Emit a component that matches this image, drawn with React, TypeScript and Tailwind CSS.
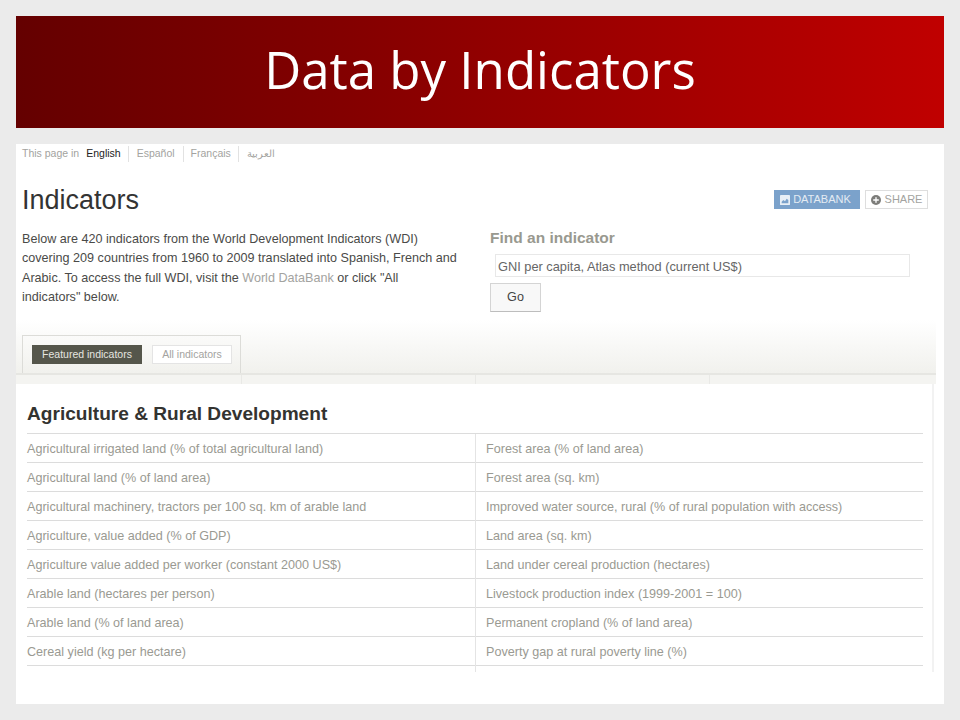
import { Plus } from 'lucide-react';

const leftRows = [
  'Agricultural irrigated land (% of total agricultural land)',
  'Agricultural land (% of land area)',
  'Agricultural machinery, tractors per 100 sq. km of arable land',
  'Agriculture, value added (% of GDP)',
  'Agriculture value added per worker (constant 2000 US$)',
  'Arable land (hectares per person)',
  'Arable land (% of land area)',
  'Cereal yield (kg per hectare)',
];

const rightRows = [
  'Forest area (% of land area)',
  'Forest area (sq. km)',
  'Improved water source, rural (% of rural population with access)',
  'Land area (sq. km)',
  'Land under cereal production (hectares)',
  'Livestock production index (1999-2001 = 100)',
  'Permanent cropland (% of land area)',
  'Poverty gap at rural poverty line (%)',
];

function IndicatorList({ rows, className = '', itemClassName = '' }: { rows: string[]; className?: string; itemClassName?: string }) {
  return (
    <ul className={className}>
      {rows.map((row) => (
        <li key={row} className={`h-[29px] border-b border-[#dcdcdc] text-[12.6px] leading-[30px] whitespace-nowrap text-[#9a9a92] ${itemClassName}`}>
          {row}
        </li>
      ))}
    </ul>
  );
}

export default function App() {
  return (
    <div className="flex h-[720px] w-[960px] flex-col gap-4 bg-[#ebebeb] p-4 font-['Liberation_Sans',Arial,sans-serif]">
      <header className="flex h-[112px] shrink-0 items-center justify-center bg-gradient-to-r from-[#640000] to-[#c00000] pb-[6px]">
        <h1 className="font-['Open_Sans',sans-serif] text-[51px] leading-none text-white">Data by Indicators</h1>
      </header>

      <main className="h-[560px] shrink-0 bg-white">
        <div className="w-[920px]">
          {/* language bar */}
          <div className="flex h-[20px] items-center pl-[6px] text-[10.5px] text-[#a3a3a0]">
            <span className="mr-[7px]">This page in</span>
            <span className="border-r border-[#e2e2e2] pr-[7px] text-[#222]">English</span>
            <span className="border-r border-[#e2e2e2] px-[8px]">Español</span>
            <span className="border-r border-[#e2e2e2] px-[7px]">Français</span>
            <span className="mb-[2px] px-[8px] font-['Noto_Sans',sans-serif] text-[10px]" dir="rtl">العربية</span>
          </div>

          <div className="flex h-[156px] pl-[6px]">
            <div className="w-[468px]">
              <h2 className="mt-[18px] text-[27px] leading-[36px] text-[#333]">Indicators</h2>
              <p className="mt-[12px] w-[437px] text-[12.6px] leading-[19.3px] text-[#4a4a48]">
                Below are 420 indicators from the World Development Indicators (WDI) covering 209 countries from 1960 to
                2009 translated into Spanish, French and Arabic. To access the full WDI, visit the{' '}
                <span className="text-[#a3a3a0]">World DataBank</span> or click "All indicators" below.
              </p>
            </div>

            <div className="flex-1">
              <div className="mt-[26px] flex justify-end gap-[5px] pr-[8px]">
                <button className="flex h-[19px] w-[86px] items-center justify-center gap-[3px] bg-[#7ba2cb] pr-[3px] text-[11px] text-[#e3ebf3]">
                  <svg viewBox="0 0 12 12" className="h-[10px] w-[10px]">
                    <rect width="12" height="12" rx="1" fill="#e8eff6" />
                    <path d="M2 10V8l2-2 2 1.500 2-3 2 1.500V10z" fill="#7ba2cb" />
                  </svg>
                  DATABANK
                </button>
                <button className="flex h-[19px] w-[63px] items-center justify-center gap-[4px] border border-[#dedede] bg-white text-[11px] text-[#a3a3a0]">
                  <span className="flex h-[10px] w-[10px] items-center justify-center rounded-full bg-[#7d7d7a]">
                    <Plus className="h-[8px] w-[8px] text-white" strokeWidth={4} />
                  </span>
                  SHARE
                </button>
              </div>
              <h3 className="mt-[20px] text-[15.5px] leading-[18px] font-bold text-[#99998f]">Find an indicator</h3>
              <div className="mt-[7px] ml-[5px] h-[23px] w-[415px] border border-[#e8e8e8] pl-[2px] text-[12.8px] leading-[23px] text-[#666]">
                GNI per capita, Atlas method (current US$)
              </div>
              <button className="mt-[6px] block h-[29px] w-[51px] border border-[#d4d4d4] border-b-[#bdbdbd] bg-[#f8f8f8] text-[12.6px] text-[#444]">
                Go
              </button>
            </div>
          </div>

          {/* tabs strip */}
          <div className="h-[55px] border-b-2 border-[#e6e6e2] bg-gradient-to-b from-white to-[#f1f1ed] pt-[15px] pl-[6px]">
            <div className="flex h-[38px] w-[219px] gap-[10px] border-x border-t border-[#dcdcd8] pt-[9px] pl-[9px]">
              <span className="flex h-[19px] w-[110px] items-center justify-center bg-[#55564b] text-[10.5px] text-[#e6e6e0]">
                Featured indicators
              </span>
              <span className="flex h-[19px] w-[80px] items-center justify-center border border-[#e4e4e4] bg-white text-[10.5px] text-[#a3a3a0]">
                All indicators
              </span>
            </div>
          </div>
          <div className="flex h-[9px] bg-[#f4f4f1]">
            <div className="ml-[225px] h-full w-[235px] border-x border-[#e9e9e6]" />
            <div className="h-full w-[234px] border-r border-[#e9e9e6]" />
          </div>

          <section className="h-[288px] w-[918px] border-r-2 border-[#f2f2f2] pr-[9px] pl-[11px]">
            <h2 className="pt-[19px] text-[19.1px] leading-[22px] font-bold text-[#333330]">Agriculture &amp; Rural Development</h2>
            <div className="mt-[8px] flex border-t border-[#dcdcdc]">
              <IndicatorList rows={leftRows} className="w-[448px] shrink-0" />
              <IndicatorList rows={rightRows} className="flex-1 border-l border-[#e4e4e4] pb-[6px]" itemClassName="pl-[10px]" />
            </div>
          </section>
        </div>
      </main>
    </div>
  );
}
